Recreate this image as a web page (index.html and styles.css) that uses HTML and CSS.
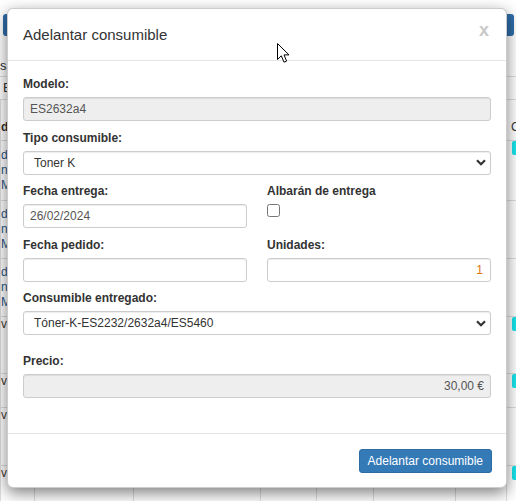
FILE: index.html
```html
<!DOCTYPE html>
<html lang="es">
<head>
<meta charset="utf-8">
<title>Adelantar consumible</title>
<link rel="stylesheet" href="styles.css">
</head>
<body>
<div class="page">
  <div class="toolbar">
    <span class="tb-btn tb-left"></span>
    <span class="tb-btn tb-right"></span>
  </div>
  <div class="frow frow1"><span>s</span></div>
  <div class="frow frow2"><span class="ind">E</span></div>
  <table class="grid">
    <colgroup>
      <col class="c1"><col class="c2"><col class="c3"><col class="c4"><col class="c5"><col class="c6"><col class="c7"><col class="c8">
    </colgroup>
    <tr class="hrow"><th>d</th><th></th><th></th><th></th><th></th><th></th><th></th><th class="cr">C</th></tr>
    <tr class="r60"><td class="lnk mid">d<br>nc<br>M</td><td></td><td></td><td></td><td></td><td></td><td></td><td class="pt9"><span class="badge"></span></td></tr>
    <tr class="r58"><td class="lnk mid">d<br>nc<br>M</td><td></td><td></td><td></td><td></td><td></td><td></td><td></td></tr>
    <tr class="r58"><td class="lnk mid">d<br>nc<br>M</td><td></td><td></td><td></td><td></td><td></td><td></td><td></td></tr>
    <tr class="r57"><td class="txt">v</td><td></td><td></td><td></td><td></td><td></td><td></td><td class="pt5"><span class="badge"></span></td></tr>
    <tr class="r34"><td class="txt">v</td><td></td><td></td><td></td><td></td><td></td><td></td><td class="pt7"><span class="badge"></span></td></tr>
    <tr class="r58"><td class="txt">v</td><td></td><td></td><td></td><td></td><td></td><td></td><td></td></tr>
    <tr class="r40"><td class="txt">v</td><td></td><td></td><td></td><td></td><td></td><td></td><td class="pt3"><span class="badge"></span></td></tr>
  </table>
</div>

<div class="modal">
  <div class="modal-header">
    <h4 class="modal-title">Adelantar consumible</h4>
    <span class="close">x</span>
  </div>
  <div class="modal-body">
    <div class="group">
      <label>Modelo:</label>
      <input class="field ro" type="text" value="ES2632a4" readonly>
    </div>
    <div class="group">
      <label>Tipo consumible:</label>
      <div class="select"><span>Toner K</span><svg class="chev" width="10" height="7" viewBox="0 0 10 7"><path d="M1 1.3 L5 5.3 L9 1.3" fill="none" stroke="#333" stroke-width="2.2"/></svg></div>
    </div>
    <div class="cols">
      <div class="group">
        <label>Fecha entrega:</label>
        <input class="field" type="text" value="26/02/2024">
      </div>
      <div class="group">
        <label>Albarán de entrega</label>
        <input class="check" type="checkbox">
      </div>
      <div class="group">
        <label>Fecha pedido:</label>
        <input class="field" type="text" value="">
      </div>
      <div class="group">
        <label>Unidades:</label>
        <input class="field num" type="text" value="1">
      </div>
    </div>
    <div class="group">
      <label>Consumible entregado:</label>
      <div class="select"><span>Tóner-K-ES2232/2632a4/ES5460</span><svg class="chev" width="10" height="7" viewBox="0 0 10 7"><path d="M1 1.3 L5 5.3 L9 1.3" fill="none" stroke="#333" stroke-width="2.2"/></svg></div>
    </div>
    <div class="group spaced">
      <label>Precio:</label>
      <input class="field ro right" type="text" value="30,00 €" readonly>
    </div>
  </div>
  <div class="modal-footer">
    <button class="btn" type="button">Adelantar consumible</button>
  </div>
</div>

<svg class="cursor" width="14" height="21" viewBox="0 0 14 21"><path d="M0.5 0.5 L0.5 16.5 L4.3 12.8 L7 19.2 L9.6 18.1 L7 11.9 L12 11.9 Z" fill="#fff" stroke="#000" stroke-width="1" stroke-linejoin="miter"/></svg>
</body>
</html>
```

FILE: styles.css
```css
* { box-sizing: border-box; }
html, body { margin: 0; padding: 0; }
body {
  width: 516px;
  height: 501px;
  overflow: hidden;
  position: relative;
  background: #fff;
  color: #333;
  font-family: "Liberation Sans", Arial, Helvetica, sans-serif;
  font-size: 12px;
}

/* background page */
.page { width: 540px; }
.toolbar {
  width: 514px;
  height: 44px;
  padding: 14px 0 0 3px;
  display: flex;
  justify-content: space-between;
  align-items: flex-start;
}
.tb-btn {
  display: block;
  height: 22px;
  width: 60px;
  background: #2f6eaa;
  border-radius: 3px;
}
.frow {
  border-bottom: 1px solid #ddd;
  line-height: 15px;
  font-size: 13px;
}
.frow1 { height: 33px; padding-top: 14px; }
.frow2 { height: 23px; padding-top: 3px; }
.frow2 .ind { padding-left: 3px; }

.grid {
  border-collapse: collapse;
  table-layout: fixed;
  width: 540px;
}
.c1 { width: 34px; }
.c2 { width: 99px; }
.c3 { width: 127px; }
.c4 { width: 56px; }
.c5 { width: 57px; }
.c6 { width: 82px; }
.c7 { width: 51px; }
.c8 { width: 34px; }
.grid th, .grid td {
  border: 1px solid #ddd;
  border-top: none;
  padding: 0;
  vertical-align: top;
  text-align: left;
  font-size: 12px;
  line-height: 15px;
}
.grid th {
  height: 40px;
  vertical-align: bottom;
  padding-bottom: 5px;
  font-weight: bold;
}
.grid th.cr { padding-left: 4px; font-weight: normal; }
.r60 td { height: 60px; }
.r58 td { height: 58px; }
.r57 td { height: 57px; }
.r34 td { height: 34px; }
.r40 td { height: 40px; }
.grid td.mid { vertical-align: middle; }
.lnk { color: #2a5687; }
.txt { color: #4a4030; padding-top: 4px; }
.pt3 { padding-top: 3px; }
.pt5 { padding-top: 5px; }
.pt7 { padding-top: 7px; }
.pt9 { padding-top: 9px; }
.grid td[class^="pt"] { padding-left: 5px; }
.badge {
  display: block;
  width: 26px;
  height: 14px;
  background: #18e4ec;
  border-radius: 2px;
}

/* modal */
.modal {
  position: absolute;
  left: 7px;
  top: 8px;
  width: 500px;
  background: #fff;
  border: 1px solid rgba(0, 0, 0, 0.2);
  border-radius: 6px;
  box-shadow: 0 5px 15px rgba(0, 0, 0, 0.5);
}
.modal-header {
  padding: 15px 17px 15px 15px;
  border-bottom: 1px solid #e5e5e5;
  display: flex;
  justify-content: space-between;
  align-items: flex-start;
}
.modal-title {
  margin: 0;
  font-size: 15px;
  font-weight: normal;
  line-height: 21.43px;
  color: #333;
}
.close {
  font-size: 18px;
  font-weight: bold;
  line-height: 18px;
  color: #c9c9c9;
  margin-top: -3px;
}
.modal-body { padding: 15px 15px 27px; }
.group { margin-bottom: 8.5px; }
.group.spaced { margin-top: 17.5px; }
.group label {
  display: block;
  font-weight: bold;
  line-height: 17px;
  margin-bottom: 4px;
  color: #333;
}
.cols {
  display: grid;
  grid-template-columns: 224px 224px;
  column-gap: 20px;
}
.field {
  display: block;
  width: 100%;
  height: 24px;
  margin: 0;
  padding: 0 6px;
  border: 1px solid #ccc;
  border-radius: 3px;
  background: #fff;
  color: #555;
  font-family: "Liberation Sans", Arial, Helvetica, sans-serif;
  font-size: 12px;
  box-shadow: inset 0 1px 1px rgba(0, 0, 0, 0.075);
  outline: none;
}
.field.ro { background: #eee; }
.field.right { text-align: right; }
.field.num {
  text-align: right;
  color: #e0730e;
  -webkit-text-fill-color: #e0730e;
  padding-right: 7px;
}
.select {
  height: 24px;
  border: 1px solid #ccc;
  border-radius: 3px;
  background: #fff;
  padding: 0 4px 0 10px;
  display: flex;
  align-items: center;
  justify-content: space-between;
  color: #333;
  box-shadow: inset 0 1px 1px rgba(0, 0, 0, 0.075);
}
.chev { display: block; }
.check {
  display: block;
  width: 13px;
  height: 13px;
  margin: 0;
}
.modal-footer {
  border-top: 1px solid #e5e5e5;
  padding: 15px 14px 14px 15px;
  display: flex;
  justify-content: flex-end;
}
.btn {
  height: 24px;
  padding: 0 8px;
  margin: 0;
  border: 1px solid #2e6da4;
  border-radius: 3px;
  background: #337ab7;
  color: #fff;
  font-family: "Liberation Sans", Arial, Helvetica, sans-serif;
  font-size: 12px;
  line-height: 22px;
}

.cursor {
  position: absolute;
  left: 277px;
  top: 43px;
}
```
